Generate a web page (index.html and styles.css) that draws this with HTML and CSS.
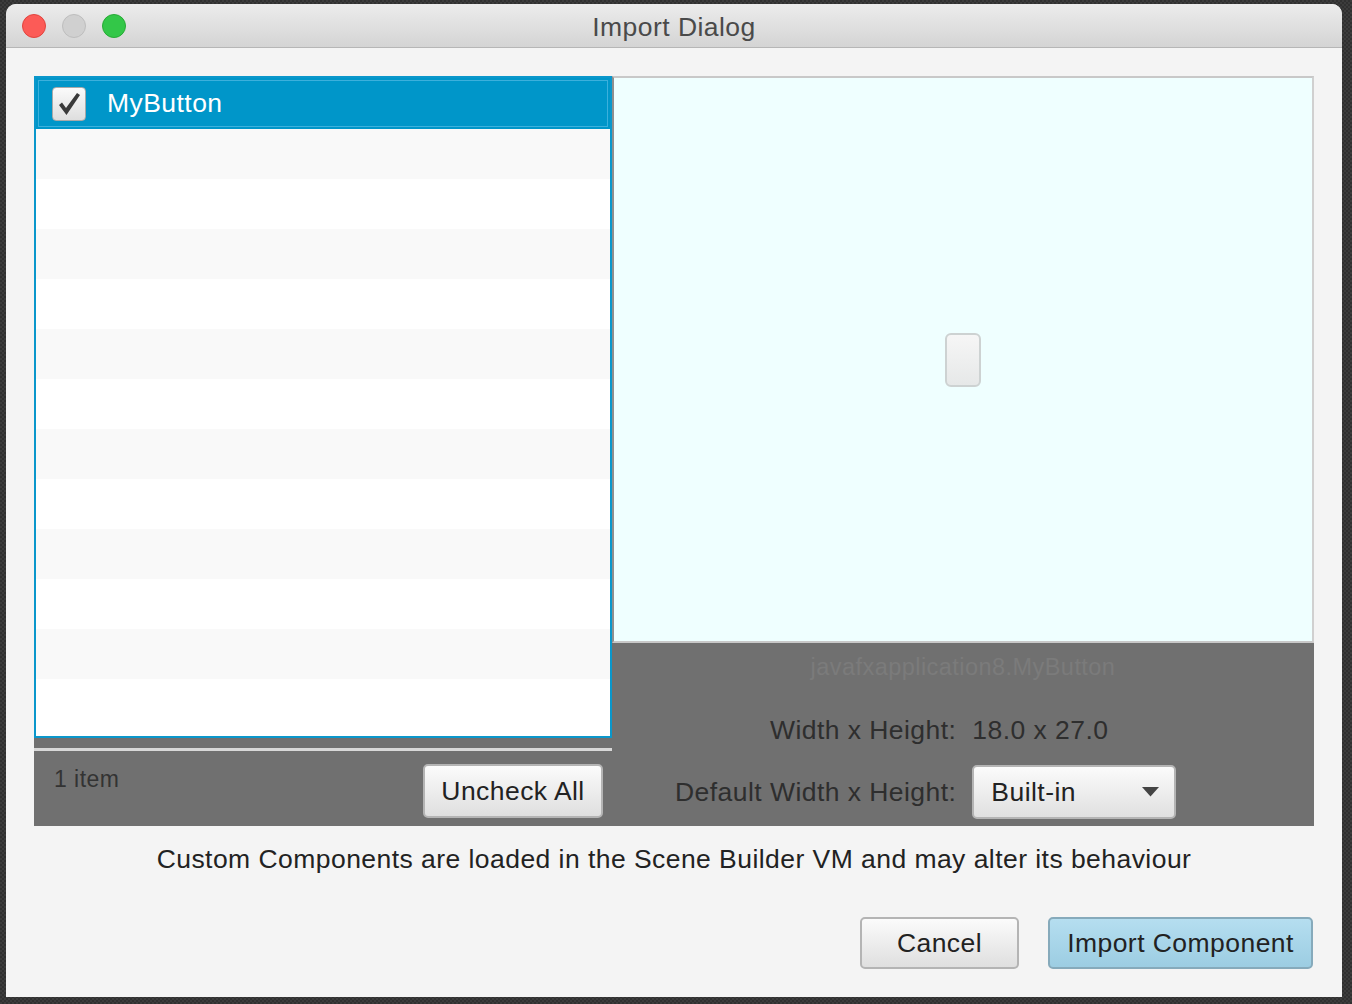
FILE: index.html
```html
<!DOCTYPE html>
<html>
<head>
<meta charset="utf-8">
<title>Import Dialog</title>
<link rel="stylesheet" href="styles.css">
</head>
<body>
<div class="window">
  <div class="titlebar">
    <div class="lights">
      <span class="light red"></span>
      <span class="light gray"></span>
      <span class="light green"></span>
    </div>
    <div class="title">Import Dialog</div>
    <div></div>
  </div>
  <div class="content">
    <div class="main">
      <div class="left">
        <div class="list">
          <div class="row selected">
            <span class="checkbox">
              <svg width="34" height="34" viewBox="0 0 34 34"><path d="M7 18 L10 15.5 L14 21 L25 6 L28 8 L14.5 28 Z" fill="#3a3a3a"/></svg>
            </span>
            <span class="row-label">MyButton</span>
          </div>
          <div class="row odd"></div>
          <div class="row"></div>
          <div class="row odd"></div>
          <div class="row"></div>
          <div class="row odd"></div>
          <div class="row"></div>
          <div class="row odd"></div>
          <div class="row"></div>
          <div class="row odd"></div>
          <div class="row"></div>
          <div class="row odd"></div>
          <div class="row"></div>
        </div>
        <div class="left-footer">
          <div class="separator"></div>
          <div class="footer-row">
            <span class="count">1 item</span>
            <button class="btn uncheck">Uncheck All</button>
          </div>
        </div>
      </div>
      <div class="right">
        <div class="preview">
          <div class="mini-button"></div>
        </div>
        <div class="info">
          <div class="classname">javafxapplication8.MyButton</div>
          <div class="props">
            <span class="label first">Width x Height:</span>
            <span class="value">18.0 x 27.0</span>
            <span class="label">Default Width x Height:</span>
            <div class="combo">
              <span>Built-in</span>
              <svg width="17" height="10" viewBox="0 0 17 10"><path d="M0 0 H17 L8.5 9.5 Z" fill="#444"/></svg>
            </div>
          </div>
        </div>
      </div>
    </div>
    <div class="message">Custom Components are loaded in the Scene Builder VM and may alter its behaviour</div>
    <div class="actions">
      <button class="btn cancel">Cancel</button>
      <button class="btn primary">Import Component</button>
    </div>
  </div>
</div>
</body>
</html>
```
FILE: styles.css
```css
html, body {
  margin: 0;
  padding: 0;
}
body {
  width: 1352px;
  height: 1004px;
  overflow: hidden;
  background: repeating-conic-gradient(#3c3c3c 0 25%, #303030 0 50%) 0 0 / 4px 4px;
  font-family: "Liberation Sans", Arial, sans-serif;
  color: #2e2e2e;
  letter-spacing: 0.45px;
}
.window {
  margin: 4px 0 0 6px;
  width: 1336px;
  height: 993px;
  background: #f4f4f4;
  border-radius: 10px 10px 0 0;
  overflow: hidden;
}
.titlebar {
  height: 43px;
  border-bottom: 1px solid #b6b6b6;
  background: linear-gradient(#ececec, #d4d4d4);
  display: grid;
  grid-template-columns: 1fr auto 1fr;
  align-items: center;
}
.lights {
  display: flex;
  gap: 16px;
  padding-left: 16px;
  padding-top: 1px;
}
.light {
  width: 24px;
  height: 24px;
  border-radius: 50%;
  box-sizing: border-box;
}
.red { background: #fc5b57; border: 1px solid #e0443e; }
.gray { background: #d0d0d0; border: 1px solid #bdbdbd; }
.green { background: #33c748; border: 1px solid #27aa35; }
.title {
  font-size: 26.5px;
  color: #4a4a4a;
  padding-top: 3px;
}
.content {
  padding: 28px 28px 0 28px;
}
.main {
  display: flex;
  height: 750px;
  background: #707070;
}
.left {
  width: 578px;
  display: flex;
  flex-direction: column;
}
.list {
  height: 662px;
  box-sizing: border-box;
  border: 2px solid #0a97cb;
  background: #fff;
  overflow: hidden;
}
.row {
  height: 50px;
  background: #fff;
}
.row.odd {
  background: #f9f9f9;
}
.row.selected {
  background: #0096c9;
  box-shadow: inset 0 0 0 2px #0096c9, inset 0 0 0 3px #3cb0dc;
  display: flex;
  align-items: center;
  padding-left: 16px;
  height: 51px;
}
.checkbox {
  width: 34px;
  height: 34px;
  box-sizing: border-box;
  border: 1px solid #a9a9a9;
  border-radius: 4px;
  background: linear-gradient(#fbfbfb, #dedede);
  display: block;
}
.checkbox svg {
  display: block;
  margin: -1px;
}
.row-label {
  color: #fff;
  font-size: 26.5px;
  margin-left: 21px;
}
.left-footer {
  flex: 1;
  display: flex;
  flex-direction: column;
}
.separator {
  margin-top: 10px;
  height: 3px;
  background: #d8d8d8;
}
.footer-row {
  display: flex;
  justify-content: space-between;
  align-items: flex-start;
  padding: 13px 9px 0 20px;
}
.count {
  font-size: 23px;
  color: #333;
  margin-top: 2px;
}
.btn {
  font-family: "Liberation Sans", Arial, sans-serif;
  font-size: 26.5px;
  letter-spacing: 0.45px;
  color: #222;
  height: 54px;
  box-sizing: border-box;
  border: 2px solid #b4b4b4;
  border-radius: 5px;
  background: linear-gradient(#fbfbfb, #dfdfdf);
  padding: 0;
  cursor: default;
}
.uncheck {
  width: 180px;
}
.right {
  flex: 1;
  display: flex;
  flex-direction: column;
}
.preview {
  height: 567px;
  box-sizing: border-box;
  background: #efffff;
  border-top: 2px solid #c8c8c8;
  border-left: 2px solid #8f8f8f;
  border-right: 2px solid #d0d0d0;
  border-bottom: 2px solid #c8c8c8;
  display: flex;
  align-items: center;
  justify-content: center;
}
.mini-button {
  width: 36px;
  height: 54px;
  box-sizing: border-box;
  border: 2px solid #cdd2d2;
  border-radius: 6px;
  background: linear-gradient(#f6f6f6, #e6e8e8);
}
.info {
  flex: 1;
  display: flex;
  flex-direction: column;
}
.classname {
  text-align: center;
  font-size: 23.5px;
  color: #7b7b7b;
  margin-top: 11px;
  height: 28px;
}
.props {
  display: grid;
  grid-template-columns: auto auto;
  column-gap: 16px;
  row-gap: 20px;
  align-items: center;
  justify-content: start;
  margin-left: 63px;
  margin-top: 33px;
}
.label {
  text-align: right;
  font-size: 26.5px;
  color: #2e2e2e;
}
.value {
  font-size: 26.5px;
  color: #2e2e2e;
}
.props .value, .props .label.first {
  height: 30px;
  line-height: 30px;
}
.combo {
  width: 204px;
  height: 54px;
  box-sizing: border-box;
  border: 2px solid #b4b4b4;
  border-radius: 5px;
  background: linear-gradient(#fbfbfb, #e0e0e0);
  display: flex;
  align-items: center;
  justify-content: space-between;
  padding: 0 15px 0 17px;
  font-size: 26.5px;
  color: #222;
}
.message {
  text-align: center;
  font-size: 26.5px;
  color: #222;
  line-height: 30px;
  margin-top: 18px;
}
.actions {
  display: flex;
  justify-content: flex-end;
  gap: 29px;
  margin-top: 43px;
  margin-right: 1px;
}
.cancel {
  width: 159px;
  height: 52px;
}
.primary {
  width: 265px;
  height: 52px;
  background: linear-gradient(#b5def0, #9ccde2);
  border-color: #86aabb;
}
```
